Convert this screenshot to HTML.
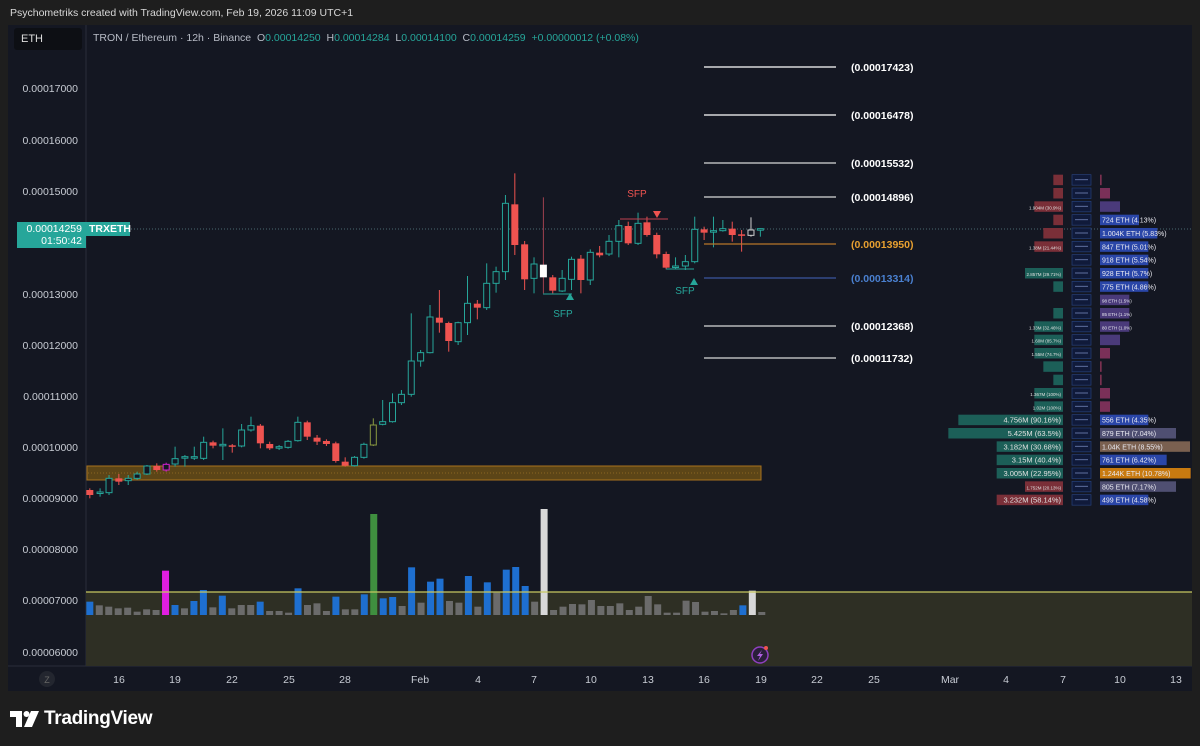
<!DOCTYPE html><html><head><meta charset="utf-8"><style>
body{margin:0;width:1200px;height:746px;background:#1e1e1e;overflow:hidden;font-family:"Liberation Sans",sans-serif;position:relative}
.a{position:absolute}
</style></head><body>
<div class="a" style="left:10px;top:7px;color:#d8d8d8;font-size:10.5px">Psychometriks created with TradingView.com, Feb 19, 2026 11:09 UTC+1</div>
<div class="a" style="left:8px;top:25px;width:1184px;height:666px;background:#141722"></div>
<svg class="a" style="left:0;top:0" width="1200" height="746" id="s" font-family="Liberation Sans, sans-serif"></svg>
<div class="a" style="left:14px;top:28px;width:68px;height:22px;background:#0d0f14;border-radius:3px;color:#ddd;font-size:11px;line-height:22px;text-indent:7px">ETH</div>
<div class="a" style="left:93px;top:32px;font-size:10.5px;color:#b8bcc6;white-space:pre">TRON / Ethereum · 12h · Binance  O<span style="color:#26a69a">0.00014250</span>  H<span style="color:#26a69a">0.00014284</span>  L<span style="color:#26a69a">0.00014100</span>  C<span style="color:#26a69a">0.00014259</span>  <span style="color:#26a69a">+0.00000012 (+0.08%)</span></div>
<div class="a" style="left:17px;top:222px;width:69px;height:26px;background:#26a69a;color:#fff;font-size:10.5px;text-align:right;line-height:12px;box-sizing:border-box;padding:1px 4px 0 0">0.00014259<br>01:50:42</div>
<div class="a" style="left:86px;top:222px;width:44px;height:14px;background:#26a69a;color:#fff;font-size:10.5px;line-height:14px;text-indent:3px;font-weight:bold">TRXETH</div>
<svg class="a" style="left:10px;top:711px" width="30" height="16" viewBox="0 0 30 16"><path d="M0 0H12V16H6V6H0Z" fill="#fff"/><circle cx="16.5" cy="3" r="3" fill="#fff"/><path d="M21 0H29L22 16H14Z" fill="#fff"/></svg>
<div class="a" style="left:44px;top:708px;color:#fff;font-size:19px;font-weight:bold;letter-spacing:-0.3px">TradingView</div>
<script>
var s=document.getElementById('s'),h='';
function R(x,y,w,hh,f,x2){h+='<rect x="'+x+'" y="'+y+'" width="'+w+'" height="'+hh+'" fill="'+f+'" '+(x2||'')+'/>';}
function L(x1,y1,x2,y2,c,w,x3){h+='<line x1="'+x1+'" y1="'+y1+'" x2="'+x2+'" y2="'+y2+'" stroke="'+c+'" stroke-width="'+(w||1)+'" '+(x3||'')+'/>';}
function T(x,y,t,c,sz,a,x3){h+='<text x="'+x+'" y="'+y+'" fill="'+c+'" font-size="'+sz+'" text-anchor="'+(a||'start')+'" '+(x3||'')+'>'+t+'</text>';}
L(86,25,86,690,'#2a2e39');
R(8,666,1184,25,'#141722');L(8,666,1192,666,'#2a2e39');
R(86,592,1106,74,'#2e2f24');
var pl=['0.00017000','0.00016000','0.00015000','0.00013000','0.00012000','0.00011000','0.00010000','0.00009000','0.00008000','0.00007000','0.00006000'];
var py=[88,140,191,294,345,396,447,498,549,600,652];
for(var i=0;i<pl.length;i++)T(78,py[i]+4,pl[i],'#c8ccd4',10.5,'end');
var tl=[['16',119],['19',175],['22',232],['25',289],['28',345],['Feb',420],['4',478],['7',534],['10',591],['13',648],['16',704],['19',761],['22',817],['25',874],['Mar',950],['4',1006],['7',1063],['10',1120],['13',1176]];
tl.forEach(function(t){T(t[1],683,t[0],'#c8ccd4',10.5,'middle');});
h+='<circle cx="47" cy="679" r="8" fill="#23262f"/>';T(47,683,'Z','#666',9,'middle');
R(87,466,674,14,'#5c4517','stroke="#a8721e" stroke-width="1"');
L(88,473,760,473,'#8a6520',1,'stroke-dasharray="1 2"');
L(86,229,1192,229,'#4a6a70',1,'stroke-dasharray="1 2"');
var C=[[22,960,975,955,985,'r'],[45,966,970,955,980,'g'],[65,925,968,915,975,'g'],[87,925,935,912,945,'r'],[108,925,932,915,945,'g'],[128,912,925,905,930,'g'],[150,888,912,885,915,'g'],[172,888,900,880,905,'r'],[193,883,900,878,905,'m'],[213,866,882,830,890,'g'],[235,860,862,855,890,'g'],[256,860,864,830,870,'g'],[277,817,865,800,870,'g'],[298,817,827,812,835,'r'],[320,823,826,775,870,'g'],[341,826,830,822,848,'r'],[362,780,828,762,832,'g'],[383,767,780,740,785,'g'],[404,767,820,762,835,'r'],[425,822,835,815,840,'r'],[446,830,834,825,840,'g'],[466,814,832,810,836,'g'],[488,757,812,740,815,'g'],[509,757,800,752,810,'r'],[531,803,815,795,825,'r'],[552,813,822,808,828,'r'],[573,820,873,815,878,'r'],[594,875,887,862,890,'r'],[615,862,887,858,890,'g'],[636,823,862,818,866,'g'],[657,765,825,745,828,'o'],[678,755,763,690,766,'g'],[700,698,755,670,758,'g'],[720,673,698,660,705,'g'],[742,573,673,430,680,'g'],[763,548,573,540,590,'g'],[784,441,548,405,550,'g'],[805,443,458,360,488,'r'],[826,459,513,455,545,'r'],[847,458,515,455,525,'g'],[868,400,458,318,495,'g'],[890,401,413,390,448,'r'],[911,340,413,280,420,'g'],[932,305,340,290,368,'g'],[953,100,305,75,330,'g'],[974,103,225,10,255,'r'],[996,223,328,213,360,'r'],[1017,282,325,262,370,'g'],[1038,284,322,82,370,'w'],[1059,322,362,315,370,'r'],[1080,325,363,300,366,'g'],[1101,268,328,260,360,'g'],[1122,266,330,255,370,'r'],[1143,247,330,238,345,'g'],[1164,248,256,228,262,'r'],[1185,214,252,195,258,'g'],[1207,167,214,150,262,'g'],[1228,168,220,155,225,'r'],[1250,160,220,128,225,'g'],[1270,157,195,140,200,'r'],[1292,195,253,188,265,'r'],[1313,252,293,245,298,'r'],[1334,288,292,262,296,'g'],[1356,275,288,255,300,'g'],[1377,178,275,140,280,'g'],[1398,178,188,170,210,'r'],[1419,182,186,140,232,'g'],[1440,176,182,150,185,'g'],[1461,176,195,155,215,'r'],[1482,193,197,180,245,'r'],[1503,180,196,142,200,'w2'],[1524,176,180,175,200,'g']];
C.forEach(function(c){var x=80+c[0]/2.24,yo=170+c[1]/3,yc=170+c[2]/3,yh=170+c[3]/3,yl=170+c[4]/3,t=c[5];
var col=t=='r'?'#ef5350':t=='m'?'#d020d0':t=='o'?'#8a9a40':t=='w'?'#ffffff':t=='w2'?'#d0d0d0':'#26a69a';
var wc=t=='w'?'#a04050':col;
L(x,yh,x,yl,wc,1);var t0=Math.min(yo,yc),hh=Math.max(Math.abs(yc-yo),1.5);
if(t=='r'||t=='w')R(x-3.5,t0,7,hh,col);else R(x-3,t0,6,hh,'#141722','stroke="'+col+'" stroke-width="1"');});
var V=[[305,'b'],[316],[320],[325],[323],[335],[328],[330],[212,'m'],[315,'b'],[325],[303,'b'],[270,'b'],[322],[287,'b'],[325],[315],[315],[305,'b'],[333],[333],[338],[265,'b'],[315],[310],[333],[290,'b'],[328],[328],[283,'b'],[42,'gr'],[295,'b'],[291,'b'],[318],[202,'b'],[308],[245,'b'],[236,'b'],[303],[308],[228,'b'],[320],[247,'b'],[278],[209,'b'],[201,'b'],[258,'b'],[305],[27,'w'],[330],[320],[312],[313],[300],[318],[318],[310],[330],[320],[288],[313],[338],[338],[302],[306],[335],[333],[340],[330],[316,'b'],[272,'w'],[336]];
V.forEach(function(v,i){var x=80+(22+i*21.2)/2.24,y=500+v[0]/3,t=v[1];var col=t=='b'?'#1e6fd0':t=='m'?'#e01ee0':t=='gr'?'#3f8f3f':t=='w'?'#d8d8d8':'#6b6b6b';R(x-3.5,y,7,615-y,col);});
L(86,592,1192,592,'#c8c860',1.3);
var lv=[[67,'#fff','(0.00017423)'],[115,'#fff','(0.00016478)'],[163,'#d8d8d8','(0.00015532)'],[197,'#d8d8d8','(0.00014896)'],[244,'#b8762a','(0.00013950)','#e8a030'],[278,'#3a55a0','(0.00013314)','#4a80d0'],[326,'#d8d8d8','(0.00012368)'],[358,'#d8d8d8','(0.00011732)']];
lv.forEach(function(l){L(704,l[0],836,l[0],l[1],1.3);T(851,l[0]+4,l[2],l[3]||'#fff',10.5,'start','font-weight="bold"');});
T(637,197,'SFP','#ef5350',10,'middle');h+='<polygon points="653,211 661,211 657,218" fill="#ef5350"/>';L(620,219,668,219,'#c04050',1);
T(563,317,'SFP','#26a69a',10,'middle');h+='<polygon points="566,300 574,300 570,293" fill="#26a69a"/>';L(543,294,572,294,'#26a69a',1);
T(685,294,'SFP','#26a69a',10,'middle');h+='<polygon points="690,285 698,285 694,278" fill="#26a69a"/>';L(666,269,694,269,'#26a69a',1);
h+='<circle cx="760" cy="655" r="8" fill="#2a1f3a" stroke="#9040c0" stroke-width="1.5"/><path d="M762 650 L757 656 L760 656 L758 661 L763 654 L760 654 Z" fill="#b060e0"/><circle cx="766" cy="648" r="2" fill="#ef5350"/>';
var lefts=[340,340,283,340,310,283,null,255,340,null,340,283,283,283,310,340,283,283,55,25,170,170,170,255,170];
var lc=['r','r','r','r','r','r','','t','t','','t','t','t','t','t','t','t','t','t','t','t','t','t','r','r'];
var ltx={2:'1.904M (30.9%)',5:'1.38M (21.44%)',7:'2.857M (29.71%)',11:'1.33M (32.46%)',12:'1.60M (85.7%)',13:'1.55M (74.7%)',16:'1.367M (100%)',17:'1.02M (100%)',18:'4.756M (90.16%)',19:'5.425M (63.5%)',20:'3.182M (30.68%)',21:'3.15M (40.4%)',22:'3.005M (22.95%)',23:'1.752M (20.13%)',24:'3.232M (58.14%)'};
var rights=[485,510,540,597,652,625,625,625,625,568,568,568,540,510,485,485,510,510,625,708,750,680,752,708,625];
var rc=['p','k','u','b','b','b','b','b','b','u','u','u','u','k','p','p','k','k','b','g','n','b','o','g','b'];
var rtx={3:'724 ETH (4.13%)',4:'1.004K ETH (5.83%)',5:'847 ETH (5.01%)',6:'918 ETH (5.54%)',7:'928 ETH (5.7%)',8:'775 ETH (4.86%)',9:'98 ETH (1.5%)',10:'85 ETH (1.1%)',11:'80 ETH (1.0%)',18:'556 ETH (4.35%)',19:'879 ETH (7.04%)',20:'1.04K ETH (8.55%)',21:'761 ETH (6.42%)',22:'1.244K ETH (10.78%)',23:'805 ETH (7.17%)',24:'499 ETH (4.58%)'};
var cm={r:'#7a2f38',t:'#1c5f58',p:'#7a3050',k:'#7a3058',u:'#4a3a7a',b:'#2a46a8',g:'#4f4f72',n:'#7a6050',o:'#c87a10'};
for(var k=0;k<25;k++){var y=170+(k*40+14)/3,hh=10.5;
R(1072,y,19,hh,'#101a3a','stroke="#26407a" stroke-width="0.7"');L(1075,y+5,1088,y+5,'#6070a0',1);
if(lefts[k]!=null){var x0=940+lefts[k]/3;R(x0,y,1063-x0,hh,cm[lc[k]]);if(ltx[k])T(1061,y+8,ltx[k],'#e0e0e0',k>=18&&k!=23?7.5:4.5,'end');}
var x1=1100,w=(rights[k]-480)/3;R(x1,y,Math.max(w,1),hh,cm[rc[k]]);if(rtx[k])T(1102,y+8,rtx[k],'#e8e8f0',(k>=3&&k<=8)||k>=18?7:4.5);}
s.innerHTML=h;
</script>
</body></html>
